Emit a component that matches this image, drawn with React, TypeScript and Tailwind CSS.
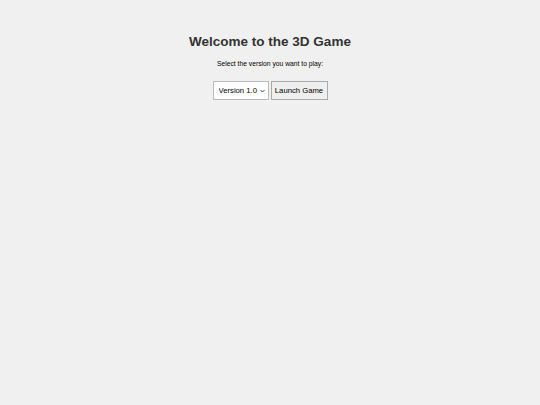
export default function App() {
  return (
    <div className="min-h-[405px] w-full bg-[#f0f0f0] font-['Liberation_Sans',Arial,sans-serif] text-[#333]">
      <div className="flex flex-col items-center pt-[33px]">
        <h1 className="text-[13.5px] font-bold leading-[17px]">Welcome to the 3D Game</h1>
        <p className="mt-[9px] text-[6.75px] leading-[9px] text-black">Select the version you want to play:</p>
        <div className="mt-[13px] flex items-center gap-[2px]">
          <div className="relative flex">
            <select
              defaultValue="1.0"
              className="block h-[19px] w-[56px] appearance-none border border-[#bbb] bg-white pl-[5px] text-[7.7px] leading-[17px] text-black outline-none"
            >
              <option value="1.0">Version 1.0</option>
              <option value="2.0">Version 2.0</option>
            </select>
            <svg
              className="pointer-events-none absolute right-[4px] top-[8px]"
              width="5"
              height="4"
              viewBox="0 0 5 4"
            >
              <path d="M0.5 1 L2.5 3 L4.5 1" fill="none" stroke="#333" strokeWidth="0.9" />
            </svg>
          </div>
          <button className="flex h-[19px] w-[57px] items-center justify-center border border-[#aaa] bg-[#efefef] text-[7.7px] leading-[17px] text-black">
            Launch Game
          </button>
        </div>
      </div>
    </div>
  );
}
